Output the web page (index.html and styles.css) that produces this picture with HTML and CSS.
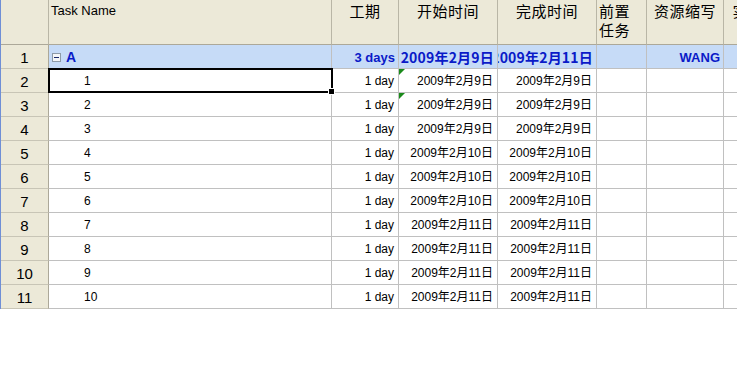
FILE: index.html
```html
<!DOCTYPE html>
<html lang="zh-CN">
<head>
<meta charset="utf-8">
<title>Gantt table</title>
<link rel="stylesheet" href="styles.css">
</head>
<body>
<div class="sheet">
  <div class="grid">
    <div class="hd corner"></div>
    <div class="hd hd-left">Task Name</div>
    <div class="hd hd-cn">工期</div>
    <div class="hd hd-cn">开始时间</div>
    <div class="hd hd-cn">完成时间</div>
    <div class="hd hd-cn hd-pre">前置<br>任务</div>
    <div class="hd hd-cn">资源缩写</div>
    <div class="hd hd-cn">实际工期</div>

    <div class="rn">1</div>
    <div class="c sum name"><span class="tog"></span><span class="sum-a">A</span></div>
    <div class="c sum r"><span class="bold-en">3 days</span></div>
    <div class="c sum r"><span class="bold-cn">2009年2月9日</span></div>
    <div class="c sum r"><span class="bold-cn">2009年2月11日</span></div>
    <div class="c sum"></div>
    <div class="c sum r"><span class="bold-en">WANG</span></div>
    <div class="c sum"></div>

    <div class="rn">2</div>
    <div class="c task sel">1<span class="outline"><span class="handle"></span></span></div>
    <div class="c r">1 day</div>
    <div class="c r date flag">2009年2月9日</div>
    <div class="c r date">2009年2月9日</div>
    <div class="c"></div><div class="c"></div><div class="c"></div>

    <div class="rn">3</div>
    <div class="c task">2</div>
    <div class="c r">1 day</div>
    <div class="c r date flag">2009年2月9日</div>
    <div class="c r date">2009年2月9日</div>
    <div class="c"></div><div class="c"></div><div class="c"></div>

    <div class="rn">4</div>
    <div class="c task">3</div>
    <div class="c r">1 day</div>
    <div class="c r date">2009年2月9日</div>
    <div class="c r date">2009年2月9日</div>
    <div class="c"></div><div class="c"></div><div class="c"></div>

    <div class="rn">5</div>
    <div class="c task">4</div>
    <div class="c r">1 day</div>
    <div class="c r date">2009年2月10日</div>
    <div class="c r date">2009年2月10日</div>
    <div class="c"></div><div class="c"></div><div class="c"></div>

    <div class="rn">6</div>
    <div class="c task">5</div>
    <div class="c r">1 day</div>
    <div class="c r date">2009年2月10日</div>
    <div class="c r date">2009年2月10日</div>
    <div class="c"></div><div class="c"></div><div class="c"></div>

    <div class="rn">7</div>
    <div class="c task">6</div>
    <div class="c r">1 day</div>
    <div class="c r date">2009年2月10日</div>
    <div class="c r date">2009年2月10日</div>
    <div class="c"></div><div class="c"></div><div class="c"></div>

    <div class="rn">8</div>
    <div class="c task">7</div>
    <div class="c r">1 day</div>
    <div class="c r date">2009年2月11日</div>
    <div class="c r date">2009年2月11日</div>
    <div class="c"></div><div class="c"></div><div class="c"></div>

    <div class="rn">9</div>
    <div class="c task">8</div>
    <div class="c r">1 day</div>
    <div class="c r date">2009年2月11日</div>
    <div class="c r date">2009年2月11日</div>
    <div class="c"></div><div class="c"></div><div class="c"></div>

    <div class="rn">10</div>
    <div class="c task">9</div>
    <div class="c r">1 day</div>
    <div class="c r date">2009年2月11日</div>
    <div class="c r date">2009年2月11日</div>
    <div class="c"></div><div class="c"></div><div class="c"></div>

    <div class="rn">11</div>
    <div class="c task">10</div>
    <div class="c r">1 day</div>
    <div class="c r date">2009年2月11日</div>
    <div class="c r date">2009年2月11日</div>
    <div class="c"></div><div class="c"></div><div class="c"></div>
  </div>
</div>
</body>
</html>
```

FILE: styles.css
```css
html, body {
  margin: 0;
  padding: 0;
  background: #ffffff;
  overflow: hidden;
}

.sheet {
  width: 737px;
  height: 384px;
  overflow: hidden;
}

.grid {
  display: grid;
  grid-template-columns: 48px 283px 67px 99px 99px 50px 77px 80px;
  grid-template-rows: 45px;
  grid-auto-rows: 24px;
  width: max-content;
  border-left: 1px solid #6f8fd6;
  font-family: "Liberation Sans", "Noto Sans CJK SC", sans-serif;
  color: #000;
}

.grid > div {
  box-sizing: border-box;
  border-right: 1px solid #c0c0c0;
  border-bottom: 1px solid #c0c0c0;
  white-space: nowrap;
  overflow: hidden;
}

.hd {
  background: #ece9d8;
  border-right-color: #b9b6a6 !important;
  border-bottom-color: #aca899 !important;
}

.hd-left {
  font-size: 13px;
  padding: 3px 0 0 2px;
}

.hd-cn {
  font-family: "Noto Sans CJK SC", sans-serif;
  font-size: 15px;
  line-height: 19px;
  text-align: center;
  padding-top: 1px;
  letter-spacing: 0.5px;
}

.hd-pre {
  text-align: left;
  padding-left: 2px;
}

.rn {
  background: #ece9d8;
  border-right-color: #aca899 !important;
  border-bottom-color: #c8c5b6 !important;
  font-size: 15px;
  line-height: 23px;
  padding-top: 1px;
  text-align: center;
}

.c {
  font-size: 12px;
  line-height: 23px;
  padding: 1px 4px 0;
  display: flex;
  align-items: center;
}

.r {
  justify-content: flex-end;
}

.date {
  font-family: "Liberation Sans", "Noto Sans CJK SC", sans-serif;
  padding-right: 4px;
}

.task {
  padding-left: 35px;
}

.sum {
  background: #c6dbf7;
  color: #0a1ac8;
  font-weight: bold;
  padding-right: 3px;
}

.name {
  padding-left: 3px;
}

.tog {
  width: 7px;
  height: 7px;
  border: 1px solid #8d9aa8;
  background: #f4f6f8;
  position: relative;
  margin-right: 5px;
  flex: none;
}

.tog::after {
  content: "";
  position: absolute;
  left: 1px;
  top: 3px;
  width: 5px;
  height: 1px;
  background: #1a2a6a;
}

.sum-a {
  font-size: 14px;
}

.bold-en {
  font-family: "Liberation Sans", sans-serif;
  font-size: 13px;
}

.bold-cn {
  font-family: "Noto Sans CJK SC", sans-serif;
  font-size: 14px;
  letter-spacing: 0.2px;
}

.sel {
  position: relative;
  overflow: visible !important;
}

.outline {
  position: absolute;
  left: -1px;
  top: -1px;
  right: -2px;
  bottom: -1px;
  border: 2px solid #000;
  z-index: 2;
}

.handle {
  position: absolute;
  right: -4px;
  bottom: -4px;
  width: 5px;
  height: 5px;
  background: #000;
  border: 1px solid #fff;
}

.flag {
  position: relative;
}

.flag::before {
  content: "";
  position: absolute;
  left: 0;
  top: 0;
  border-top: 6px solid #1a8a1a;
  border-right: 6px solid transparent;
}
```
